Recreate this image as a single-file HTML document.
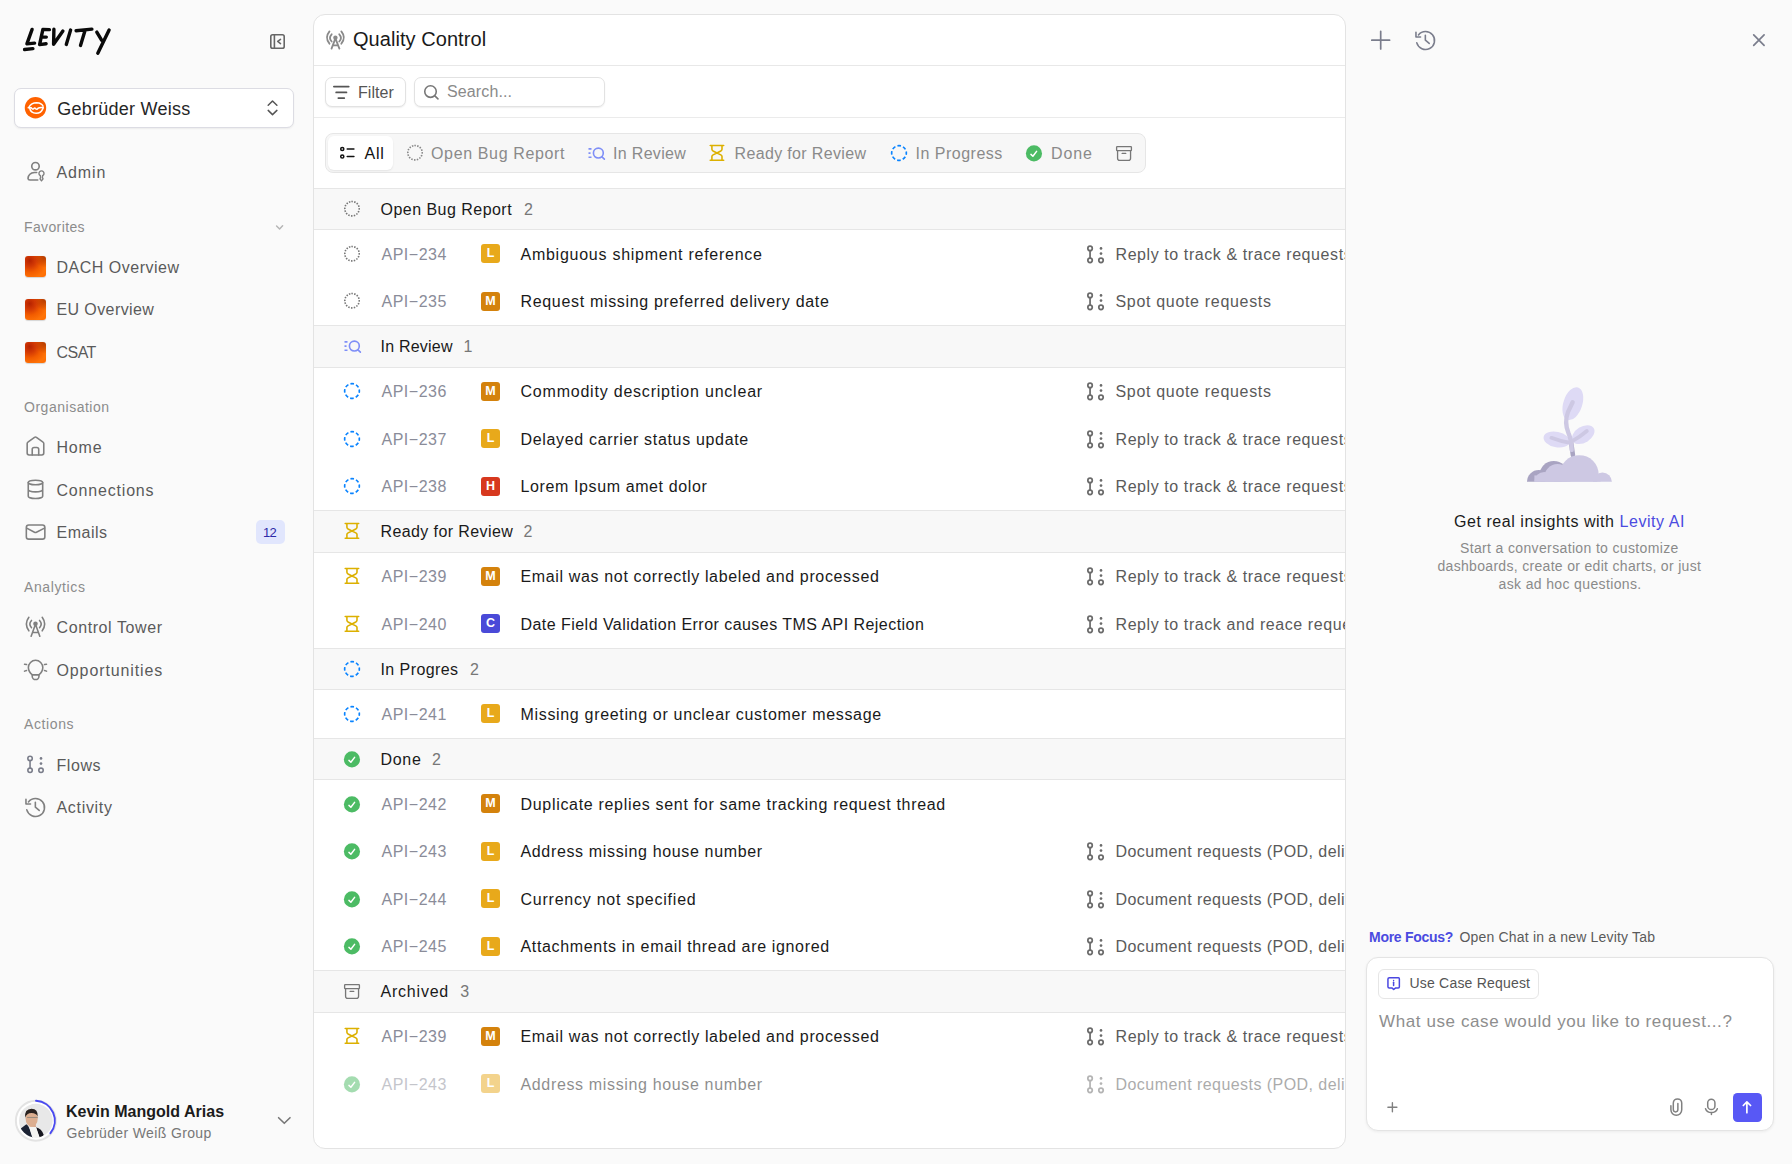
<!DOCTYPE html>
<html><head><meta charset="utf-8"><title>Quality Control</title><style>
*{box-sizing:border-box;margin:0;padding:0}
html,body{width:1792px;height:1164px;overflow:hidden}
body{position:relative;background:#fafafa;font-family:"Liberation Sans",sans-serif;color:#1c1c1c}
.t{position:absolute;white-space:nowrap}
.ic{position:absolute;overflow:visible}
.abs{position:absolute}
</style></head><body>
<svg class="ic" style="left:0px;top:0px;" width="130" height="70" viewBox="0 0 130 70" fill="none" stroke-linecap="round" stroke-linejoin="round"><g stroke="#0a0a0a" stroke-width="3.4" stroke-linecap="round" stroke-linejoin="round" fill="none"><path d="M32.1 29.4 L26.9 43.9 L34.6 43.1"/><path d="M24.6 49.5 L32.9 48.6"/><path d="M49.4 29.6 L42.9 29.4 L39.6 44.6 L46.1 43.8 M41.1 37.1 L46.3 37.1"/><path d="M53.9 29.2 L53.6 44.3 L62.9 31.1"/><path d="M70.6 30.1 L66.3 44.4"/><path d="M76.1 30.7 L91.9 29.1 M85.1 30.2 L80.5 45.4"/><path d="M96.8 32.1 L101.6 40.1 M109.1 30.0 L97.8 53.3"/></g></svg>
<svg class="ic" style="left:262px;top:26px;" width="30" height="30" viewBox="0 0 30 30" fill="none" stroke-linecap="round" stroke-linejoin="round"><g stroke="#666" stroke-width="1.6" fill="none" stroke-linecap="round" stroke-linejoin="round"><rect x="8.8" y="8.8" width="13.4" height="13.5" rx="1.8"/><path d="M12.4 8.8 V22.3"/><path d="M18.5 13.4 L15.7 15.4 L18.5 17.6"/></g></svg>
<div class="abs" style="left:14px;top:88px;width:280px;height:40px;background:#fff;border:1px solid #dcdce3;border-radius:7px;box-shadow:0 1px 2px rgba(0,0,0,0.06)"></div>
<svg class="ic" style="left:8px;top:82px;" width="60" height="52" viewBox="0 0 1343 1164" fill="none" stroke-linecap="round" stroke-linejoin="round"><circle cx="615" cy="577" r="240" fill="#ff6200"/><g stroke="#fff" stroke-width="34" fill="none" stroke-linecap="round" stroke-linejoin="round"><path d="M470 560 Q520 462 640 462 Q760 466 785 545"/><path d="M488 592 Q505 698 630 700 Q745 696 782 592"/><path d="M452 574 H520 Q548 622 575 598 Q600 570 618 600 Q645 625 668 592 Q700 565 790 574"/></g></svg>
<div class="t" style="left:57.20px;top:99.00px;font-size:18px;line-height:20px;color:#262626;letter-spacing:0.262px;">Gebrüder Weiss</div>
<svg class="ic" style="left:262px;top:96px;" width="22" height="24" viewBox="0 0 22 24" fill="none" stroke-linecap="round" stroke-linejoin="round"><path d="M6.2 9.2 L10.5 5 L14.9 9.2 M6.2 14.4 L10.5 18.6 L14.9 14.4" stroke="#555" stroke-width="1.5" fill="none" stroke-linecap="round" stroke-linejoin="round"/></svg>
<svg class="ic" style="left:22px;top:158px;" width="28" height="28" viewBox="0 0 1164 1164" fill="none" stroke-linecap="round" stroke-linejoin="round"><circle cx="560" cy="340" r="155" stroke="#808080" stroke-width="68"/><path d="M610 605 H520 Q270 625 250 850 Q255 915 330 915 H655" stroke="#808080" stroke-width="68"/><path d="M765 735 A105 105 0 1 1 855 735 L850 830 L875 870 L810 950 L748 870 L770 830 Z" stroke="#808080" stroke-width="58"/></svg>
<div class="t" style="left:56.50px;top:163.00px;font-size:16px;line-height:20px;color:#5a5a5a;letter-spacing:0.875px;">Admin</div>
<div class="t" style="left:24.00px;top:217.40px;font-size:14px;line-height:20px;color:#8c8c8c;letter-spacing:0.375px;">Favorites</div>
<svg class="ic" style="left:266px;top:214px;" width="28" height="28" viewBox="0 0 1164 1164" fill="none" stroke-linecap="round" stroke-linejoin="round"><path d="M440 500 L565 620 L690 490" stroke="#b5b5b5" stroke-width="62"/></svg>
<div class="abs" style="left:25px;top:256.0px;width:21px;height:21px;border-radius:3px;background:radial-gradient(circle at 95% 4%, rgba(150,40,0,.7) 0, rgba(150,40,0,0) 38%),radial-gradient(circle at 22% 22%, #b52200 0%, #d43a04 26%, #f25c00 50%, #ff7408 78%, #ff6a00 100%);box-shadow:0 0.5px 1px rgba(0,0,0,.15)"></div>
<div class="t" style="left:56.50px;top:257.50px;font-size:16px;line-height:20px;color:#5a5a5a;letter-spacing:0.500px;">DACH Overview</div>
<div class="abs" style="left:25px;top:298.5px;width:21px;height:21px;border-radius:3px;background:radial-gradient(circle at 95% 4%, rgba(150,40,0,.7) 0, rgba(150,40,0,0) 38%),radial-gradient(circle at 22% 22%, #b52200 0%, #d43a04 26%, #f25c00 50%, #ff7408 78%, #ff6a00 100%);box-shadow:0 0.5px 1px rgba(0,0,0,.15)"></div>
<div class="t" style="left:56.50px;top:300.00px;font-size:16px;line-height:20px;color:#5a5a5a;letter-spacing:0.400px;">EU Overview</div>
<div class="abs" style="left:25px;top:341.5px;width:21px;height:21px;border-radius:3px;background:radial-gradient(circle at 95% 4%, rgba(150,40,0,.7) 0, rgba(150,40,0,0) 38%),radial-gradient(circle at 22% 22%, #b52200 0%, #d43a04 26%, #f25c00 50%, #ff7408 78%, #ff6a00 100%);box-shadow:0 0.5px 1px rgba(0,0,0,.15)"></div>
<div class="t" style="left:56.50px;top:343.00px;font-size:16px;line-height:20px;color:#5a5a5a;letter-spacing:-0.533px;">CSAT</div>
<div class="t" style="left:24.00px;top:397.40px;font-size:14px;line-height:20px;color:#8c8c8c;letter-spacing:0.518px;">Organisation</div>
<svg class="ic" style="left:22px;top:433px;" width="28" height="28" viewBox="0 0 1164 1164" fill="none" stroke-linecap="round" stroke-linejoin="round"><path d="M215 440 Q215 400 245 380 L520 180 Q560 150 600 180 L875 380 Q905 400 905 440 V835 Q905 915 825 915 H295 Q215 915 215 835 Z" stroke="#808080" stroke-width="66"/><path d="M425 915 V680 Q425 600 505 600 H615 Q695 600 695 680 V915" stroke="#808080" stroke-width="66"/></svg>
<div class="t" style="left:56.50px;top:438.00px;font-size:16px;line-height:20px;color:#5a5a5a;letter-spacing:0.800px;">Home</div>
<svg class="ic" style="left:22px;top:475px;" width="28" height="28" viewBox="0 0 1164 1164" fill="none" stroke-linecap="round" stroke-linejoin="round"><ellipse cx="560" cy="310" rx="300" ry="95" stroke="#808080" stroke-width="66"/><path d="M260 310 V880 A300 95 0 0 0 860 880 V310 M260 605 A300 95 0 0 0 860 605" stroke="#808080" stroke-width="66"/></svg>
<div class="t" style="left:56.50px;top:480.50px;font-size:16px;line-height:20px;color:#5a5a5a;letter-spacing:0.810px;">Connections</div>
<svg class="ic" style="left:22px;top:518px;" width="28" height="28" viewBox="0 0 1164 1164" fill="none" stroke-linecap="round" stroke-linejoin="round"><rect x="180" y="290" width="770" height="590" rx="100" stroke="#808080" stroke-width="66"/><path d="M195 420 L520 595 Q560 615 600 595 L935 420" stroke="#808080" stroke-width="66"/></svg>
<div class="t" style="left:56.50px;top:523.00px;font-size:16px;line-height:20px;color:#5a5a5a;letter-spacing:0.520px;">Emails</div>
<div class="abs" style="left:256px;top:520px;width:28.8px;height:24px;border-radius:5px;background:#e1e6fd"></div>
<div class="t" style="left:263.00px;top:523.00px;font-size:13px;line-height:20px;color:#2d2aa8;letter-spacing:-0.800px;">12</div>
<div class="t" style="left:24.00px;top:577.40px;font-size:14px;line-height:20px;color:#8c8c8c;letter-spacing:0.612px;">Analytics</div>
<svg class="ic" style="left:22px;top:613px;" width="28" height="28" viewBox="0 0 1164 1164" fill="none" stroke-linecap="round" stroke-linejoin="round"><path d="M285 180 Q80 460 285 740 M840 180 Q1045 460 840 740 M395 310 Q255 460 395 610 M730 310 Q870 460 730 610" stroke="#808080" stroke-width="66"/><circle cx="560" cy="450" r="95" fill="#808080"/><path d="M380 965 L560 470 L740 965 M460 810 H665" stroke="#808080" stroke-width="66"/></svg>
<div class="t" style="left:56.50px;top:618.00px;font-size:16px;line-height:20px;color:#5a5a5a;letter-spacing:0.592px;">Control Tower</div>
<svg class="ic" style="left:22px;top:656px;" width="28" height="28" viewBox="0 0 1164 1164" fill="none" stroke-linecap="round" stroke-linejoin="round"><path d="M430 785 Q265 650 265 480 A300 300 0 0 1 865 480 Q865 650 700 785 Z" stroke="#808080" stroke-width="66"/><path d="M425 800 V840 A140 140 0 0 0 705 840 V800" stroke="#808080" stroke-width="66"/><path d="M105 345 L190 355 M105 630 L190 600 M935 355 L1020 345 M935 600 L1020 630" stroke="#808080" stroke-width="62"/></svg>
<div class="t" style="left:56.50px;top:661.00px;font-size:16px;line-height:20px;color:#5a5a5a;letter-spacing:0.883px;">Opportunities</div>
<div class="t" style="left:24.00px;top:714.40px;font-size:14px;line-height:20px;color:#8c8c8c;letter-spacing:0.617px;">Actions</div>
<svg class="ic" style="left:22px;top:750px;" width="28" height="28" viewBox="0 0 1164 1164" fill="none" stroke-linecap="round" stroke-linejoin="round"><circle cx="335" cy="350" r="92" stroke="#7a7d8a" stroke-width="66"/><circle cx="335" cy="845" r="92" stroke="#7a7d8a" stroke-width="66"/><path d="M335 442 V753" stroke="#7a7d8a" stroke-width="66"/><circle cx="790" cy="350" r="56" fill="#7a7d8a"/><circle cx="790" cy="565" r="56" fill="#7a7d8a"/><circle cx="790" cy="845" r="92" stroke="#7a7d8a" stroke-width="66"/></svg>
<div class="t" style="left:56.50px;top:755.50px;font-size:16px;line-height:20px;color:#5a5a5a;letter-spacing:0.575px;">Flows</div>
<svg class="ic" style="left:22px;top:793px;" width="28" height="28" viewBox="0 0 1164 1164" fill="none" stroke-linecap="round" stroke-linejoin="round"><path d="M200 700 A375 375 0 1 0 268 370" stroke="#808080" stroke-width="66"/><path d="M165 265 V455 H355 M555 385 V590 L715 725" stroke="#808080" stroke-width="66"/></svg>
<div class="t" style="left:56.50px;top:798.00px;font-size:16px;line-height:20px;color:#5a5a5a;letter-spacing:0.686px;">Activity</div>
<svg class="ic" style="left:12px;top:1096px;" width="50" height="50" viewBox="0 0 1164 1164" fill="none" stroke-linecap="round" stroke-linejoin="round"><defs><clipPath id="avc"><circle cx="555" cy="575" r="392"/></clipPath></defs><circle cx="555" cy="575" r="465" fill="#fff" stroke="#e3e3e3" stroke-width="46"/><circle cx="555" cy="575" r="392" fill="#e8e8e8"/><g clip-path="url(#avc)"><path d="M400 630 L545 630 L565 750 L415 750 Z" fill="#d9a88c"/><path d="M190 770 L335 655 Q410 700 490 990 L190 990 Z" fill="#1b2233"/><path d="M555 730 Q690 760 740 910 L650 990 Z" fill="#17171f"/><path d="M395 715 L560 720 L650 990 L480 990 Z" fill="#f4f4f2"/><ellipse cx="458" cy="525" rx="142" ry="185" fill="#dcae90"/><path d="M305 505 Q285 300 455 295 Q610 300 600 480 Q565 395 455 395 Q340 395 305 505 Z" fill="#2a2220"/><path d="M360 500 H590" stroke="#8f867a" stroke-width="20"/></g><path d="M560 110 A465 465 0 0 1 895 865" stroke="#4a4af0" stroke-width="46" fill="none"/></svg>
<div class="t" style="left:66.00px;top:1101.50px;font-size:16px;line-height:20px;color:#1c1c1c;letter-spacing:0.022px;font-weight:bold;">Kevin Mangold Arias</div>
<div class="t" style="left:66.50px;top:1122.50px;font-size:14px;line-height:20px;color:#777;letter-spacing:0.361px;">Gebrüder Weiß Group</div>
<svg class="ic" style="left:270px;top:1110px;" width="28" height="22" viewBox="0 0 28 22" fill="none" stroke-linecap="round" stroke-linejoin="round"><path d="M8.6 7.7 L14.3 13.3 L20 7.7" stroke="#777" stroke-width="1.6" fill="none" stroke-linecap="round" stroke-linejoin="round"/></svg>
<div class="abs" style="left:313px;top:14px;width:1033px;height:1135px;background:#fff;border:1px solid #e3e3e3;border-radius:12px;overflow:hidden">
<div class="abs" style="left:-314px;top:-15px;width:1792px;height:1164px">
<svg class="ic" style="left:318px;top:25px;" width="34" height="30" viewBox="0 0 1319 1164" fill="none" stroke-linecap="round" stroke-linejoin="round"><path d="M445 250 Q250 490 445 725 M905 250 Q1100 490 905 725 M530 360 Q400 500 530 640 M825 360 Q955 500 825 640" stroke="#8a8a8a" stroke-width="70"/><circle cx="675" cy="490" r="85" fill="#8a8a8a"/><path d="M525 915 L675 520 L830 915 M600 790 H760" stroke="#8a8a8a" stroke-width="70"/></svg>
<div class="t" style="left:353.00px;top:27.00px;font-size:20px;line-height:24px;color:#1a1a1a;letter-spacing:0.057px;">Quality Control</div>
<div class="abs" style="left:314px;top:65px;width:1032px;height:1px;background:#e8e8e8"></div>
<div class="abs" style="left:325px;top:77px;width:81px;height:30px;border:1px solid #e2e2e2;border-radius:7px;background:#fff;box-shadow:0 1px 1.5px rgba(0,0,0,0.07)"></div>
<svg class="ic" style="left:327px;top:78px;" width="28" height="28" viewBox="0 0 1164 1164" fill="none" stroke-linecap="round" stroke-linejoin="round"><path d="M285 355 H905 M380 600 H810 M470 835 H720" stroke="#555" stroke-width="70"/></svg>
<div class="t" style="left:358.00px;top:83.00px;font-size:16px;line-height:20px;color:#555;letter-spacing:0.040px;">Filter</div>
<div class="abs" style="left:414px;top:77px;width:191px;height:30px;border:1px solid #e2e2e2;border-radius:7px;background:#fff;box-shadow:0 1px 1.5px rgba(0,0,0,0.07)"></div>
<svg class="ic" style="left:418px;top:78px;" width="28" height="28" viewBox="0 0 1164 1164" fill="none" stroke-linecap="round" stroke-linejoin="round"><circle cx="520" cy="565" r="240" stroke="#777" stroke-width="66"/><path d="M700 745 L830 870" stroke="#777" stroke-width="66"/></svg>
<div class="t" style="left:447.00px;top:81.50px;font-size:16px;line-height:20px;color:#8a8a8a;letter-spacing:0.125px;">Search...</div>
<div class="abs" style="left:314px;top:117px;width:1032px;height:1px;background:#ebebeb"></div>
<div class="abs" style="left:325px;top:133px;width:821px;height:40px;border:1px solid #e6e6e6;border-radius:8px;background:#f7f7f7"></div>
<div class="abs" style="left:328px;top:136px;width:65px;height:34px;border-radius:6px;background:#fff;box-shadow:0 1px 2px rgba(0,0,0,0.08)"></div>
<svg class="ic" style="left:333px;top:139px;" width="28" height="28" viewBox="0 0 1164 1164" fill="none" stroke-linecap="round" stroke-linejoin="round"><circle cx="385" cy="415" r="65" stroke="#111" stroke-width="62"/><circle cx="385" cy="730" r="65" stroke="#111" stroke-width="62"/><path d="M590 415 H870 M590 730 H870" stroke="#111" stroke-width="62"/></svg>
<div class="t" style="left:364.50px;top:144.00px;font-size:16px;line-height:20px;color:#111;letter-spacing:0.800px;">All</div>
<svg class="ic" style="left:400.5px;top:139px;" width="28" height="28" viewBox="0 0 1164 1164" fill="none" stroke-linecap="round" stroke-linejoin="round"><circle cx="582" cy="570" r="299" stroke="#888" stroke-width="68" stroke-dasharray="61.1 56.4" stroke-linecap="butt" transform="rotate(-95 582 570)"/></svg>
<div class="t" style="left:431.00px;top:144.00px;font-size:16px;line-height:20px;color:#8a8a8a;letter-spacing:0.643px;">Open Bug Report</div>
<svg class="ic" style="left:582px;top:139px;" width="28" height="28" viewBox="0 0 1164 1164" fill="none" stroke-linecap="round" stroke-linejoin="round"><path d="M270 410 H395 M270 585 H355 M270 760 H395" stroke="#7f8ff7" stroke-width="68" stroke-linecap="butt"/><circle cx="680" cy="585" r="205" stroke="#7f8ff7" stroke-width="68"/><path d="M830 740 L930 835" stroke="#7f8ff7" stroke-width="68"/></svg>
<div class="t" style="left:613.00px;top:144.00px;font-size:16px;line-height:20px;color:#8a8a8a;letter-spacing:0.325px;">In Review</div>
<svg class="ic" style="left:703px;top:139px;" width="28" height="28" viewBox="0 0 1164 1164" fill="none" stroke-linecap="round" stroke-linejoin="round"><path d="M300 270 H860 M300 885 H860 M370 275 V430 Q370 470 420 500 L580 585 L740 500 Q790 470 790 430 V275 M370 880 V730 Q370 690 420 660 L580 585 L740 660 Q790 690 790 730 V880" stroke="#dcb000" stroke-width="66"/></svg>
<div class="t" style="left:734.50px;top:144.00px;font-size:16px;line-height:20px;color:#8a8a8a;letter-spacing:0.347px;">Ready for Review</div>
<svg class="ic" style="left:885px;top:139px;" width="28" height="28" viewBox="0 0 1164 1164" fill="none" stroke-linecap="round" stroke-linejoin="round"><circle cx="582" cy="582" r="305" stroke="#0a84ff" stroke-width="70" stroke-dasharray="148.5 91.0" stroke-dashoffset="74.3" stroke-linecap="butt"/></svg>
<div class="t" style="left:915.50px;top:144.00px;font-size:16px;line-height:20px;color:#8a8a8a;letter-spacing:0.500px;">In Progress</div>
<svg class="ic" style="left:1020px;top:138.5px;" width="28" height="28" viewBox="0 0 1164 1164" fill="none" stroke-linecap="round" stroke-linejoin="round"><g opacity="1"><circle cx="580" cy="598" r="335" fill="#4cbb64"/><path d="M455 640 L535 715 L690 515" stroke="#fff" stroke-width="62"/></g></svg>
<div class="t" style="left:1051.00px;top:144.00px;font-size:16px;line-height:20px;color:#8a8a8a;letter-spacing:0.883px;">Done</div>
<svg class="ic" style="left:1110px;top:139px;" width="28" height="28" viewBox="0 0 1164 1164" fill="none" stroke-linecap="round" stroke-linejoin="round"><rect x="275" y="320" width="615" height="165" rx="25" stroke="#777" stroke-width="55"/><path d="M315 490 V800 Q315 890 405 890 H765 Q855 890 855 800 V490 M505 600 H655" stroke="#777" stroke-width="55"/></svg>
<div class="abs" style="left:314px;top:187.70px;width:1032px;height:42.5px;background:#f8f8f8;border-top:1px solid #e6e6e6;border-bottom:1px solid #e6e6e6"></div>
<svg class="ic" style="left:338px;top:194.89999999999998px;" width="28" height="28" viewBox="0 0 1164 1164" fill="none" stroke-linecap="round" stroke-linejoin="round"><circle cx="582" cy="570" r="299" stroke="#777" stroke-width="68" stroke-dasharray="61.1 56.4" stroke-linecap="butt" transform="rotate(-95 582 570)"/></svg>
<div class="t" style="left:380.50px;top:199.90px;font-size:16px;line-height:20px;color:#1a1a1a;letter-spacing:0.471px;">Open Bug Report</div>
<div class="t" style="left:524.10px;top:199.90px;font-size:16px;line-height:20px;color:#777;">2</div>
<svg class="ic" style="left:338px;top:239.95px;" width="28" height="28" viewBox="0 0 1164 1164" fill="none" stroke-linecap="round" stroke-linejoin="round"><circle cx="582" cy="570" r="299" stroke="#777" stroke-width="68" stroke-dasharray="61.1 56.4" stroke-linecap="butt" transform="rotate(-95 582 570)"/></svg>
<div class="t" style="left:381.50px;top:244.95px;font-size:16px;line-height:20px;color:#8a8c99;letter-spacing:0.500px;">API−234</div>
<div class="abs" style="left:481px;top:244.45px;width:19px;height:19px;border-radius:3px;background:#e8a91b;color:#fff;font-size:12.5px;font-weight:bold;line-height:19px;text-align:center">L</div>
<div class="t" style="left:520.50px;top:244.95px;font-size:16px;line-height:20px;color:#1a1a1a;letter-spacing:0.741px;">Ambiguous shipment reference</div>
<svg class="ic" style="left:1081.7px;top:239.95px;" width="28" height="28" viewBox="0 0 1164 1164" fill="none" stroke-linecap="round" stroke-linejoin="round"><circle cx="335" cy="350" r="92" stroke="#6b6b6b" stroke-width="72"/><circle cx="335" cy="845" r="92" stroke="#6b6b6b" stroke-width="72"/><path d="M335 442 V753" stroke="#6b6b6b" stroke-width="72"/><circle cx="790" cy="350" r="56" fill="#6b6b6b"/><circle cx="790" cy="565" r="56" fill="#6b6b6b"/><circle cx="790" cy="845" r="92" stroke="#6b6b6b" stroke-width="72"/></svg>
<div class="t" style="left:1115.50px;top:244.95px;font-size:16px;line-height:20px;color:#5a5a5a;letter-spacing:0.58px;">Reply to track &amp; trace requests</div>
<svg class="ic" style="left:338px;top:287.45px;" width="28" height="28" viewBox="0 0 1164 1164" fill="none" stroke-linecap="round" stroke-linejoin="round"><circle cx="582" cy="570" r="299" stroke="#777" stroke-width="68" stroke-dasharray="61.1 56.4" stroke-linecap="butt" transform="rotate(-95 582 570)"/></svg>
<div class="t" style="left:381.50px;top:292.45px;font-size:16px;line-height:20px;color:#8a8c99;letter-spacing:0.500px;">API−235</div>
<div class="abs" style="left:481px;top:291.95px;width:19px;height:19px;border-radius:3px;background:#d4820c;color:#fff;font-size:12.5px;font-weight:bold;line-height:19px;text-align:center">M</div>
<div class="t" style="left:520.50px;top:292.45px;font-size:16px;line-height:20px;color:#1a1a1a;letter-spacing:0.671px;">Request missing preferred delivery date</div>
<svg class="ic" style="left:1081.7px;top:287.45px;" width="28" height="28" viewBox="0 0 1164 1164" fill="none" stroke-linecap="round" stroke-linejoin="round"><circle cx="335" cy="350" r="92" stroke="#6b6b6b" stroke-width="72"/><circle cx="335" cy="845" r="92" stroke="#6b6b6b" stroke-width="72"/><path d="M335 442 V753" stroke="#6b6b6b" stroke-width="72"/><circle cx="790" cy="350" r="56" fill="#6b6b6b"/><circle cx="790" cy="565" r="56" fill="#6b6b6b"/><circle cx="790" cy="845" r="92" stroke="#6b6b6b" stroke-width="72"/></svg>
<div class="t" style="left:1115.50px;top:292.45px;font-size:16px;line-height:20px;color:#5a5a5a;letter-spacing:0.68px;">Spot quote requests</div>
<div class="abs" style="left:314px;top:325.20px;width:1032px;height:42.5px;background:#f8f8f8;border-top:1px solid #e6e6e6;border-bottom:1px solid #e6e6e6"></div>
<svg class="ic" style="left:338px;top:332.4px;" width="28" height="28" viewBox="0 0 1164 1164" fill="none" stroke-linecap="round" stroke-linejoin="round"><path d="M270 410 H395 M270 585 H355 M270 760 H395" stroke="#7f8ff7" stroke-width="68" stroke-linecap="butt"/><circle cx="680" cy="585" r="205" stroke="#7f8ff7" stroke-width="68"/><path d="M830 740 L930 835" stroke="#7f8ff7" stroke-width="68"/></svg>
<div class="t" style="left:380.50px;top:337.40px;font-size:16px;line-height:20px;color:#1a1a1a;letter-spacing:0.225px;">In Review</div>
<div class="t" style="left:463.40px;top:337.40px;font-size:16px;line-height:20px;color:#777;">1</div>
<svg class="ic" style="left:338px;top:377.45px;" width="28" height="28" viewBox="0 0 1164 1164" fill="none" stroke-linecap="round" stroke-linejoin="round"><circle cx="582" cy="582" r="305" stroke="#0a84ff" stroke-width="70" stroke-dasharray="148.5 91.0" stroke-dashoffset="74.3" stroke-linecap="butt"/></svg>
<div class="t" style="left:381.50px;top:382.45px;font-size:16px;line-height:20px;color:#8a8c99;letter-spacing:0.500px;">API−236</div>
<div class="abs" style="left:481px;top:381.95px;width:19px;height:19px;border-radius:3px;background:#d4820c;color:#fff;font-size:12.5px;font-weight:bold;line-height:19px;text-align:center">M</div>
<div class="t" style="left:520.50px;top:382.45px;font-size:16px;line-height:20px;color:#1a1a1a;letter-spacing:0.786px;">Commodity description unclear</div>
<svg class="ic" style="left:1081.7px;top:377.45px;" width="28" height="28" viewBox="0 0 1164 1164" fill="none" stroke-linecap="round" stroke-linejoin="round"><circle cx="335" cy="350" r="92" stroke="#6b6b6b" stroke-width="72"/><circle cx="335" cy="845" r="92" stroke="#6b6b6b" stroke-width="72"/><path d="M335 442 V753" stroke="#6b6b6b" stroke-width="72"/><circle cx="790" cy="350" r="56" fill="#6b6b6b"/><circle cx="790" cy="565" r="56" fill="#6b6b6b"/><circle cx="790" cy="845" r="92" stroke="#6b6b6b" stroke-width="72"/></svg>
<div class="t" style="left:1115.50px;top:382.45px;font-size:16px;line-height:20px;color:#5a5a5a;letter-spacing:0.68px;">Spot quote requests</div>
<svg class="ic" style="left:338px;top:424.95px;" width="28" height="28" viewBox="0 0 1164 1164" fill="none" stroke-linecap="round" stroke-linejoin="round"><circle cx="582" cy="582" r="305" stroke="#0a84ff" stroke-width="70" stroke-dasharray="148.5 91.0" stroke-dashoffset="74.3" stroke-linecap="butt"/></svg>
<div class="t" style="left:381.50px;top:429.95px;font-size:16px;line-height:20px;color:#8a8c99;letter-spacing:0.500px;">API−237</div>
<div class="abs" style="left:481px;top:429.45px;width:19px;height:19px;border-radius:3px;background:#e8a91b;color:#fff;font-size:12.5px;font-weight:bold;line-height:19px;text-align:center">L</div>
<div class="t" style="left:520.50px;top:429.95px;font-size:16px;line-height:20px;color:#1a1a1a;letter-spacing:0.668px;">Delayed carrier status update</div>
<svg class="ic" style="left:1081.7px;top:424.95px;" width="28" height="28" viewBox="0 0 1164 1164" fill="none" stroke-linecap="round" stroke-linejoin="round"><circle cx="335" cy="350" r="92" stroke="#6b6b6b" stroke-width="72"/><circle cx="335" cy="845" r="92" stroke="#6b6b6b" stroke-width="72"/><path d="M335 442 V753" stroke="#6b6b6b" stroke-width="72"/><circle cx="790" cy="350" r="56" fill="#6b6b6b"/><circle cx="790" cy="565" r="56" fill="#6b6b6b"/><circle cx="790" cy="845" r="92" stroke="#6b6b6b" stroke-width="72"/></svg>
<div class="t" style="left:1115.50px;top:429.95px;font-size:16px;line-height:20px;color:#5a5a5a;letter-spacing:0.58px;">Reply to track &amp; trace requests</div>
<svg class="ic" style="left:338px;top:472.45px;" width="28" height="28" viewBox="0 0 1164 1164" fill="none" stroke-linecap="round" stroke-linejoin="round"><circle cx="582" cy="582" r="305" stroke="#0a84ff" stroke-width="70" stroke-dasharray="148.5 91.0" stroke-dashoffset="74.3" stroke-linecap="butt"/></svg>
<div class="t" style="left:381.50px;top:477.45px;font-size:16px;line-height:20px;color:#8a8c99;letter-spacing:0.500px;">API−238</div>
<div class="abs" style="left:481px;top:476.95px;width:19px;height:19px;border-radius:3px;background:#d7381e;color:#fff;font-size:12.5px;font-weight:bold;line-height:19px;text-align:center">H</div>
<div class="t" style="left:520.50px;top:477.45px;font-size:16px;line-height:20px;color:#1a1a1a;letter-spacing:0.610px;">Lorem Ipsum amet dolor</div>
<svg class="ic" style="left:1081.7px;top:472.45px;" width="28" height="28" viewBox="0 0 1164 1164" fill="none" stroke-linecap="round" stroke-linejoin="round"><circle cx="335" cy="350" r="92" stroke="#6b6b6b" stroke-width="72"/><circle cx="335" cy="845" r="92" stroke="#6b6b6b" stroke-width="72"/><path d="M335 442 V753" stroke="#6b6b6b" stroke-width="72"/><circle cx="790" cy="350" r="56" fill="#6b6b6b"/><circle cx="790" cy="565" r="56" fill="#6b6b6b"/><circle cx="790" cy="845" r="92" stroke="#6b6b6b" stroke-width="72"/></svg>
<div class="t" style="left:1115.50px;top:477.45px;font-size:16px;line-height:20px;color:#5a5a5a;letter-spacing:0.58px;">Reply to track &amp; trace requests</div>
<div class="abs" style="left:314px;top:510.20px;width:1032px;height:42.5px;background:#f8f8f8;border-top:1px solid #e6e6e6;border-bottom:1px solid #e6e6e6"></div>
<svg class="ic" style="left:338px;top:517.4px;" width="28" height="28" viewBox="0 0 1164 1164" fill="none" stroke-linecap="round" stroke-linejoin="round"><path d="M300 270 H860 M300 885 H860 M370 275 V430 Q370 470 420 500 L580 585 L740 500 Q790 470 790 430 V275 M370 880 V730 Q370 690 420 660 L580 585 L740 660 Q790 690 790 730 V880" stroke="#dcb000" stroke-width="66"/></svg>
<div class="t" style="left:380.50px;top:522.40px;font-size:16px;line-height:20px;color:#1a1a1a;letter-spacing:0.400px;">Ready for Review</div>
<div class="t" style="left:523.50px;top:522.40px;font-size:16px;line-height:20px;color:#777;">2</div>
<svg class="ic" style="left:338px;top:562.45px;" width="28" height="28" viewBox="0 0 1164 1164" fill="none" stroke-linecap="round" stroke-linejoin="round"><path d="M300 270 H860 M300 885 H860 M370 275 V430 Q370 470 420 500 L580 585 L740 500 Q790 470 790 430 V275 M370 880 V730 Q370 690 420 660 L580 585 L740 660 Q790 690 790 730 V880" stroke="#dcb000" stroke-width="66"/></svg>
<div class="t" style="left:381.50px;top:567.45px;font-size:16px;line-height:20px;color:#8a8c99;letter-spacing:0.500px;">API−239</div>
<div class="abs" style="left:481px;top:566.95px;width:19px;height:19px;border-radius:3px;background:#d4820c;color:#fff;font-size:12.5px;font-weight:bold;line-height:19px;text-align:center">M</div>
<div class="t" style="left:520.50px;top:567.45px;font-size:16px;line-height:20px;color:#1a1a1a;letter-spacing:0.645px;">Email was not correctly labeled and processed</div>
<svg class="ic" style="left:1081.7px;top:562.45px;" width="28" height="28" viewBox="0 0 1164 1164" fill="none" stroke-linecap="round" stroke-linejoin="round"><circle cx="335" cy="350" r="92" stroke="#6b6b6b" stroke-width="72"/><circle cx="335" cy="845" r="92" stroke="#6b6b6b" stroke-width="72"/><path d="M335 442 V753" stroke="#6b6b6b" stroke-width="72"/><circle cx="790" cy="350" r="56" fill="#6b6b6b"/><circle cx="790" cy="565" r="56" fill="#6b6b6b"/><circle cx="790" cy="845" r="92" stroke="#6b6b6b" stroke-width="72"/></svg>
<div class="t" style="left:1115.50px;top:567.45px;font-size:16px;line-height:20px;color:#5a5a5a;letter-spacing:0.58px;">Reply to track &amp; trace requests</div>
<svg class="ic" style="left:338px;top:609.95px;" width="28" height="28" viewBox="0 0 1164 1164" fill="none" stroke-linecap="round" stroke-linejoin="round"><path d="M300 270 H860 M300 885 H860 M370 275 V430 Q370 470 420 500 L580 585 L740 500 Q790 470 790 430 V275 M370 880 V730 Q370 690 420 660 L580 585 L740 660 Q790 690 790 730 V880" stroke="#dcb000" stroke-width="66"/></svg>
<div class="t" style="left:381.50px;top:614.95px;font-size:16px;line-height:20px;color:#8a8c99;letter-spacing:0.500px;">API−240</div>
<div class="abs" style="left:481px;top:614.45px;width:19px;height:19px;border-radius:3px;background:#4a4ad8;color:#fff;font-size:12.5px;font-weight:bold;line-height:19px;text-align:center">C</div>
<div class="t" style="left:520.50px;top:614.95px;font-size:16px;line-height:20px;color:#1a1a1a;letter-spacing:0.457px;">Date Field Validation Error causes TMS API Rejection</div>
<svg class="ic" style="left:1081.7px;top:609.95px;" width="28" height="28" viewBox="0 0 1164 1164" fill="none" stroke-linecap="round" stroke-linejoin="round"><circle cx="335" cy="350" r="92" stroke="#6b6b6b" stroke-width="72"/><circle cx="335" cy="845" r="92" stroke="#6b6b6b" stroke-width="72"/><path d="M335 442 V753" stroke="#6b6b6b" stroke-width="72"/><circle cx="790" cy="350" r="56" fill="#6b6b6b"/><circle cx="790" cy="565" r="56" fill="#6b6b6b"/><circle cx="790" cy="845" r="92" stroke="#6b6b6b" stroke-width="72"/></svg>
<div class="t" style="left:1115.50px;top:614.95px;font-size:16px;line-height:20px;color:#5a5a5a;letter-spacing:0.58px;">Reply to track and reace requests</div>
<div class="abs" style="left:314px;top:647.70px;width:1032px;height:42.5px;background:#f8f8f8;border-top:1px solid #e6e6e6;border-bottom:1px solid #e6e6e6"></div>
<svg class="ic" style="left:338px;top:654.9000000000001px;" width="28" height="28" viewBox="0 0 1164 1164" fill="none" stroke-linecap="round" stroke-linejoin="round"><circle cx="582" cy="582" r="305" stroke="#0a84ff" stroke-width="70" stroke-dasharray="148.5 91.0" stroke-dashoffset="74.3" stroke-linecap="butt"/></svg>
<div class="t" style="left:380.50px;top:659.90px;font-size:16px;line-height:20px;color:#1a1a1a;letter-spacing:0.422px;">In Progres</div>
<div class="t" style="left:469.90px;top:659.90px;font-size:16px;line-height:20px;color:#777;">2</div>
<svg class="ic" style="left:338px;top:699.95px;" width="28" height="28" viewBox="0 0 1164 1164" fill="none" stroke-linecap="round" stroke-linejoin="round"><circle cx="582" cy="582" r="305" stroke="#0a84ff" stroke-width="70" stroke-dasharray="148.5 91.0" stroke-dashoffset="74.3" stroke-linecap="butt"/></svg>
<div class="t" style="left:381.50px;top:704.95px;font-size:16px;line-height:20px;color:#8a8c99;letter-spacing:0.500px;">API−241</div>
<div class="abs" style="left:481px;top:704.45px;width:19px;height:19px;border-radius:3px;background:#e8a91b;color:#fff;font-size:12.5px;font-weight:bold;line-height:19px;text-align:center">L</div>
<div class="t" style="left:520.50px;top:704.95px;font-size:16px;line-height:20px;color:#1a1a1a;letter-spacing:0.672px;">Missing greeting or unclear customer message</div>
<div class="abs" style="left:314px;top:737.70px;width:1032px;height:42.5px;background:#f8f8f8;border-top:1px solid #e6e6e6;border-bottom:1px solid #e6e6e6"></div>
<svg class="ic" style="left:338px;top:744.9000000000001px;" width="28" height="28" viewBox="0 0 1164 1164" fill="none" stroke-linecap="round" stroke-linejoin="round"><g opacity="1"><circle cx="580" cy="598" r="335" fill="#4cbb64"/><path d="M455 640 L535 715 L690 515" stroke="#fff" stroke-width="62"/></g></svg>
<div class="t" style="left:380.50px;top:749.90px;font-size:16px;line-height:20px;color:#1a1a1a;letter-spacing:0.700px;">Done</div>
<div class="t" style="left:432.00px;top:749.90px;font-size:16px;line-height:20px;color:#777;">2</div>
<svg class="ic" style="left:338px;top:789.95px;" width="28" height="28" viewBox="0 0 1164 1164" fill="none" stroke-linecap="round" stroke-linejoin="round"><g opacity="1"><circle cx="580" cy="598" r="335" fill="#4cbb64"/><path d="M455 640 L535 715 L690 515" stroke="#fff" stroke-width="62"/></g></svg>
<div class="t" style="left:381.50px;top:794.95px;font-size:16px;line-height:20px;color:#8a8c99;letter-spacing:0.500px;">API−242</div>
<div class="abs" style="left:481px;top:794.45px;width:19px;height:19px;border-radius:3px;background:#d4820c;color:#fff;font-size:12.5px;font-weight:bold;line-height:19px;text-align:center">M</div>
<div class="t" style="left:520.50px;top:794.95px;font-size:16px;line-height:20px;color:#1a1a1a;letter-spacing:0.685px;">Duplicate replies sent for same tracking request thread</div>
<svg class="ic" style="left:338px;top:837.45px;" width="28" height="28" viewBox="0 0 1164 1164" fill="none" stroke-linecap="round" stroke-linejoin="round"><g opacity="1"><circle cx="580" cy="598" r="335" fill="#4cbb64"/><path d="M455 640 L535 715 L690 515" stroke="#fff" stroke-width="62"/></g></svg>
<div class="t" style="left:381.50px;top:842.45px;font-size:16px;line-height:20px;color:#8a8c99;letter-spacing:0.500px;">API−243</div>
<div class="abs" style="left:481px;top:841.95px;width:19px;height:19px;border-radius:3px;background:#e8a91b;color:#fff;font-size:12.5px;font-weight:bold;line-height:19px;text-align:center">L</div>
<div class="t" style="left:520.50px;top:842.45px;font-size:16px;line-height:20px;color:#1a1a1a;letter-spacing:0.648px;">Address missing house number</div>
<svg class="ic" style="left:1081.7px;top:837.45px;" width="28" height="28" viewBox="0 0 1164 1164" fill="none" stroke-linecap="round" stroke-linejoin="round"><circle cx="335" cy="350" r="92" stroke="#6b6b6b" stroke-width="72"/><circle cx="335" cy="845" r="92" stroke="#6b6b6b" stroke-width="72"/><path d="M335 442 V753" stroke="#6b6b6b" stroke-width="72"/><circle cx="790" cy="350" r="56" fill="#6b6b6b"/><circle cx="790" cy="565" r="56" fill="#6b6b6b"/><circle cx="790" cy="845" r="92" stroke="#6b6b6b" stroke-width="72"/></svg>
<div class="t" style="left:1115.50px;top:842.45px;font-size:16px;line-height:20px;color:#5a5a5a;letter-spacing:0.45px;">Document requests (POD, delivery notes)</div>
<svg class="ic" style="left:338px;top:884.95px;" width="28" height="28" viewBox="0 0 1164 1164" fill="none" stroke-linecap="round" stroke-linejoin="round"><g opacity="1"><circle cx="580" cy="598" r="335" fill="#4cbb64"/><path d="M455 640 L535 715 L690 515" stroke="#fff" stroke-width="62"/></g></svg>
<div class="t" style="left:381.50px;top:889.95px;font-size:16px;line-height:20px;color:#8a8c99;letter-spacing:0.500px;">API−244</div>
<div class="abs" style="left:481px;top:889.45px;width:19px;height:19px;border-radius:3px;background:#e8a91b;color:#fff;font-size:12.5px;font-weight:bold;line-height:19px;text-align:center">L</div>
<div class="t" style="left:520.50px;top:889.95px;font-size:16px;line-height:20px;color:#1a1a1a;letter-spacing:0.762px;">Currency not specified</div>
<svg class="ic" style="left:1081.7px;top:884.95px;" width="28" height="28" viewBox="0 0 1164 1164" fill="none" stroke-linecap="round" stroke-linejoin="round"><circle cx="335" cy="350" r="92" stroke="#6b6b6b" stroke-width="72"/><circle cx="335" cy="845" r="92" stroke="#6b6b6b" stroke-width="72"/><path d="M335 442 V753" stroke="#6b6b6b" stroke-width="72"/><circle cx="790" cy="350" r="56" fill="#6b6b6b"/><circle cx="790" cy="565" r="56" fill="#6b6b6b"/><circle cx="790" cy="845" r="92" stroke="#6b6b6b" stroke-width="72"/></svg>
<div class="t" style="left:1115.50px;top:889.95px;font-size:16px;line-height:20px;color:#5a5a5a;letter-spacing:0.45px;">Document requests (POD, delivery notes)</div>
<svg class="ic" style="left:338px;top:932.45px;" width="28" height="28" viewBox="0 0 1164 1164" fill="none" stroke-linecap="round" stroke-linejoin="round"><g opacity="1"><circle cx="580" cy="598" r="335" fill="#4cbb64"/><path d="M455 640 L535 715 L690 515" stroke="#fff" stroke-width="62"/></g></svg>
<div class="t" style="left:381.50px;top:937.45px;font-size:16px;line-height:20px;color:#8a8c99;letter-spacing:0.500px;">API−245</div>
<div class="abs" style="left:481px;top:936.95px;width:19px;height:19px;border-radius:3px;background:#e8a91b;color:#fff;font-size:12.5px;font-weight:bold;line-height:19px;text-align:center">L</div>
<div class="t" style="left:520.50px;top:937.45px;font-size:16px;line-height:20px;color:#1a1a1a;letter-spacing:0.655px;">Attachments in email thread are ignored</div>
<svg class="ic" style="left:1081.7px;top:932.45px;" width="28" height="28" viewBox="0 0 1164 1164" fill="none" stroke-linecap="round" stroke-linejoin="round"><circle cx="335" cy="350" r="92" stroke="#6b6b6b" stroke-width="72"/><circle cx="335" cy="845" r="92" stroke="#6b6b6b" stroke-width="72"/><path d="M335 442 V753" stroke="#6b6b6b" stroke-width="72"/><circle cx="790" cy="350" r="56" fill="#6b6b6b"/><circle cx="790" cy="565" r="56" fill="#6b6b6b"/><circle cx="790" cy="845" r="92" stroke="#6b6b6b" stroke-width="72"/></svg>
<div class="t" style="left:1115.50px;top:937.45px;font-size:16px;line-height:20px;color:#5a5a5a;letter-spacing:0.45px;">Document requests (POD, delivery notes)</div>
<div class="abs" style="left:314px;top:970.20px;width:1032px;height:42.5px;background:#f8f8f8;border-top:1px solid #e6e6e6;border-bottom:1px solid #e6e6e6"></div>
<svg class="ic" style="left:338px;top:977.4000000000001px;" width="28" height="28" viewBox="0 0 1164 1164" fill="none" stroke-linecap="round" stroke-linejoin="round"><rect x="275" y="320" width="615" height="165" rx="25" stroke="#777" stroke-width="55"/><path d="M315 490 V800 Q315 890 405 890 H765 Q855 890 855 800 V490 M505 600 H655" stroke="#777" stroke-width="55"/></svg>
<div class="t" style="left:380.50px;top:982.40px;font-size:16px;line-height:20px;color:#1a1a1a;letter-spacing:0.786px;">Archived</div>
<div class="t" style="left:460.20px;top:982.40px;font-size:16px;line-height:20px;color:#777;">3</div>
<svg class="ic" style="left:338px;top:1022.45px;" width="28" height="28" viewBox="0 0 1164 1164" fill="none" stroke-linecap="round" stroke-linejoin="round"><path d="M300 270 H860 M300 885 H860 M370 275 V430 Q370 470 420 500 L580 585 L740 500 Q790 470 790 430 V275 M370 880 V730 Q370 690 420 660 L580 585 L740 660 Q790 690 790 730 V880" stroke="#dcb000" stroke-width="66"/></svg>
<div class="t" style="left:381.50px;top:1027.45px;font-size:16px;line-height:20px;color:#8a8c99;letter-spacing:0.500px;">API−239</div>
<div class="abs" style="left:481px;top:1026.95px;width:19px;height:19px;border-radius:3px;background:#d4820c;color:#fff;font-size:12.5px;font-weight:bold;line-height:19px;text-align:center">M</div>
<div class="t" style="left:520.50px;top:1027.45px;font-size:16px;line-height:20px;color:#1a1a1a;letter-spacing:0.645px;">Email was not correctly labeled and processed</div>
<svg class="ic" style="left:1081.7px;top:1022.45px;" width="28" height="28" viewBox="0 0 1164 1164" fill="none" stroke-linecap="round" stroke-linejoin="round"><circle cx="335" cy="350" r="92" stroke="#6b6b6b" stroke-width="72"/><circle cx="335" cy="845" r="92" stroke="#6b6b6b" stroke-width="72"/><path d="M335 442 V753" stroke="#6b6b6b" stroke-width="72"/><circle cx="790" cy="350" r="56" fill="#6b6b6b"/><circle cx="790" cy="565" r="56" fill="#6b6b6b"/><circle cx="790" cy="845" r="92" stroke="#6b6b6b" stroke-width="72"/></svg>
<div class="t" style="left:1115.50px;top:1027.45px;font-size:16px;line-height:20px;color:#5a5a5a;letter-spacing:0.58px;">Reply to track &amp; trace requests</div>
<div class="abs" style="left:0;top:0;width:1792px;height:1164px;opacity:0.5">
<svg class="ic" style="left:338px;top:1069.95px;" width="28" height="28" viewBox="0 0 1164 1164" fill="none" stroke-linecap="round" stroke-linejoin="round"><g opacity="1"><circle cx="580" cy="598" r="335" fill="#4cbb64"/><path d="M455 640 L535 715 L690 515" stroke="#fff" stroke-width="62"/></g></svg>
<div class="t" style="left:381.50px;top:1074.95px;font-size:16px;line-height:20px;color:#8a8c99;letter-spacing:0.500px;">API−243</div>
<div class="abs" style="left:481px;top:1074.45px;width:19px;height:19px;border-radius:3px;background:#e8a91b;color:#fff;font-size:12.5px;font-weight:bold;line-height:19px;text-align:center">L</div>
<div class="t" style="left:520.50px;top:1074.95px;font-size:16px;line-height:20px;color:#1a1a1a;letter-spacing:0.648px;">Address missing house number</div>
<svg class="ic" style="left:1081.7px;top:1069.95px;" width="28" height="28" viewBox="0 0 1164 1164" fill="none" stroke-linecap="round" stroke-linejoin="round"><circle cx="335" cy="350" r="92" stroke="#6b6b6b" stroke-width="72"/><circle cx="335" cy="845" r="92" stroke="#6b6b6b" stroke-width="72"/><path d="M335 442 V753" stroke="#6b6b6b" stroke-width="72"/><circle cx="790" cy="350" r="56" fill="#6b6b6b"/><circle cx="790" cy="565" r="56" fill="#6b6b6b"/><circle cx="790" cy="845" r="92" stroke="#6b6b6b" stroke-width="72"/></svg>
<div class="t" style="left:1115.50px;top:1074.95px;font-size:16px;line-height:20px;color:#5a5a5a;letter-spacing:0.45px;">Document requests (POD, delivery notes)</div>
</div>
</div></div>
<svg class="ic" style="left:1366px;top:26px;" width="30" height="30" viewBox="0 0 30 30" fill="none" stroke-linecap="round" stroke-linejoin="round"><path d="M14.7 5.3 V22.9 M5.8 14.2 H23.6" stroke="#7a7d8c" stroke-width="1.7" fill="none" stroke-linecap="round"/></svg>
<svg class="ic" style="left:1412px;top:26px;" width="28" height="28" viewBox="0 0 1164 1164" fill="none" stroke-linecap="round" stroke-linejoin="round"><path d="M200 700 A375 375 0 1 0 268 370" stroke="#7a7d8c" stroke-width="66"/><path d="M165 265 V455 H355 M555 385 V590 L715 725" stroke="#7a7d8c" stroke-width="66"/></svg>
<svg class="ic" style="left:1744px;top:26px;" width="30" height="30" viewBox="0 0 30 30" fill="none" stroke-linecap="round" stroke-linejoin="round"><path d="M9.7 8.8 L20.1 19.4 M20.1 8.8 L9.7 19.4" stroke="#7a7d8c" stroke-width="1.7" fill="none" stroke-linecap="round"/></svg>
<svg class="ic" style="left:1515px;top:380px;" width="110" height="110" viewBox="0 0 1164 1164" fill="none" stroke-linecap="round" stroke-linejoin="round"><g><path d="M613 795 Q600 700 590 640" stroke="#a9a4c2" stroke-width="48" fill="none" stroke-linecap="round"/><ellipse cx="612" cy="250" rx="100" ry="180" transform="rotate(18 612 250)" fill="#dedaf5"/><ellipse cx="440" cy="630" rx="140" ry="82" transform="rotate(12 440 630)" fill="#dedaf5"/><ellipse cx="722" cy="578" rx="130" ry="85" transform="rotate(-32 722 578)" fill="#dedaf5"/><path d="M600 740 Q600 640 565 560 Q520 450 560 340 L610 235" stroke="#cdc8e3" stroke-width="46" fill="none" stroke-linecap="round"/><path d="M385 612 Q480 650 585 665 M760 540 Q690 600 610 645" stroke="#cdc8e3" stroke-width="40" fill="none" stroke-linecap="round"/><clipPath id="cm"><rect x="0" y="0" width="1164" height="1078"/></clipPath><g clip-path="url(#cm)" fill="#a9a4c2"><circle cx="252" cy="1078" r="125"/><circle cx="410" cy="1010" r="152"/></g><g clip-path="url(#cm)" fill="#cdc8e3"><circle cx="310" cy="1078" r="105"/><circle cx="450" cy="1030" r="140"/><circle cx="680" cy="1000" r="205"/><circle cx="925" cy="1078" r="100"/><rect x="205" y="1010" width="700" height="68"/></g></g></svg>
<div class="t" style="left:1454px;top:512px;font-size:16px;line-height:20px;color:#1a1a1a;letter-spacing:0.548px">Get real insights with <span style="color:#4b4be0">Levity AI</span></div>
<div class="t" style="left:1460.00px;top:539.00px;font-size:14px;line-height:18px;color:#8a8a8a;letter-spacing:0.356px;">Start a conversation to customize</div>
<div class="t" style="left:1437.50px;top:557.00px;font-size:14px;line-height:18px;color:#8a8a8a;letter-spacing:0.312px;">dashboards, create or edit charts, or just</div>
<div class="t" style="left:1498.50px;top:575.00px;font-size:14px;line-height:18px;color:#8a8a8a;letter-spacing:0.365px;">ask ad hoc questions.</div>
<div class="t" style="left:1369.00px;top:927.00px;font-size:14px;line-height:20px;color:#4a4ae0;letter-spacing:-0.270px;font-weight:bold;">More Focus?</div>
<div class="t" style="left:1459.50px;top:927.00px;font-size:14px;line-height:20px;color:#5a5a5a;letter-spacing:0.179px;">Open Chat in a new Levity Tab</div>
<div class="abs" style="left:1365.5px;top:957px;width:408.5px;height:174px;background:#fff;border:1px solid #e4e4e4;border-radius:12px;box-shadow:0 1px 3px rgba(0,0,0,0.06)"></div>
<div class="abs" style="left:1377.5px;top:968.5px;width:161.5px;height:30.5px;background:#fff;border:1px solid #e6e6e6;border-radius:6px"></div>
<svg class="ic" style="left:1380px;top:969px;" width="28" height="28" viewBox="0 0 1164 1164" fill="none" stroke-linecap="round" stroke-linejoin="round"><path d="M390 365 H770 Q805 365 805 420 V735 Q805 785 760 785 H655 L570 850 L490 785 H385 Q330 785 330 735 V420 Q330 365 390 365 Z" stroke="#4a47e0" stroke-width="62"/><circle cx="565" cy="480" r="30" fill="#4a47e0"/><path d="M565 550 V690" stroke="#4a47e0" stroke-width="62"/></svg>
<div class="t" style="left:1409.50px;top:973.00px;font-size:14px;line-height:20px;color:#555;letter-spacing:0.200px;">Use Case Request</div>
<div class="t" style="left:1379.00px;top:1011.00px;font-size:17px;line-height:22px;color:#8e8e8e;letter-spacing:0.595px;">What use case would you like to request...?</div>
<svg class="ic" style="left:1380px;top:1095px;" width="24" height="24" viewBox="0 0 24 24" fill="none" stroke-linecap="round" stroke-linejoin="round"><path d="M12.4 7.7 V16.7 M7.9 12.2 H16.9" stroke="#808080" stroke-width="1.4" fill="none" stroke-linecap="round"/></svg>
<svg class="ic" style="left:1662px;top:1093px;" width="28" height="28" viewBox="0 0 1164 1164" fill="none" stroke-linecap="round" stroke-linejoin="round"><path d="M370 530 V700 A225 225 0 0 0 820 700 V420 A175 175 0 0 0 470 420 V690 A95 95 0 0 0 660 690 V435" stroke="#808080" stroke-width="62"/></svg>
<svg class="ic" style="left:1697px;top:1093px;" width="28" height="28" viewBox="0 0 1164 1164" fill="none" stroke-linecap="round" stroke-linejoin="round"><rect x="445" y="260" width="300" height="430" rx="150" stroke="#808080" stroke-width="62"/><path d="M355 655 C400 780 500 815 600 815 C700 815 800 780 845 655 M600 815 V895" stroke="#808080" stroke-width="62"/></svg>
<div class="abs" style="left:1733px;top:1093px;width:28.5px;height:28.5px;border-radius:4.5px;background:#5858f5"></div>
<svg class="ic" style="left:1730px;top:1090px;" width="34" height="34" viewBox="0 0 1164 1164" fill="none" stroke-linecap="round" stroke-linejoin="round"><path d="M578 420 V775 M455 530 L578 405 L705 530" stroke="#fff" stroke-width="58" fill="none" stroke-linecap="round" stroke-linejoin="round"/></svg>
</body></html>
